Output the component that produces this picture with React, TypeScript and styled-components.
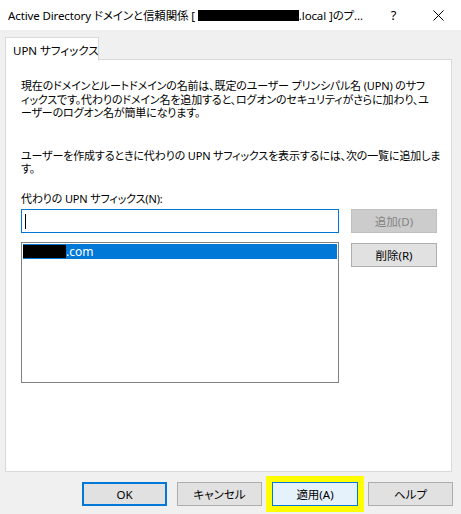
import React from 'react';
import styled, { createGlobalStyle } from 'styled-components';

const GlobalStyle = createGlobalStyle`
  html, body {
    margin: 0;
    padding: 0;
    background: #f0f0f0;
  }
  body {
    font-family: "Noto Sans", "Noto Sans CJK JP", sans-serif;
    font-size: 11px;
    color: #000;
  }
`;

const Window = styled.div`
  width: 461px;
  height: 514px;
  display: flex;
  flex-direction: column;
  background: #f0f0f0;
  overflow: hidden;
`;

const TitleBar = styled.div`
  height: 30px;
  flex: none;
  background: #ffffff;
  display: flex;
  align-items: center;
  padding-left: 8px;
`;

const Title = styled.div`
  flex: 1;
  font-size: 11.5px;
  letter-spacing: -0.12px;
  white-space: nowrap;
  display: flex;
  align-items: center;
  font-feature-settings: "palt";
`;

const Redacted = styled.span<{ w: number; h: number }>`
  display: inline-block;
  width: ${(p) => p.w}px;
  height: ${(p) => p.h}px;
  background: #000;
`;

const TitleButton = styled.div`
  width: 45px;
  height: 30px;
  display: flex;
  align-items: center;
  justify-content: center;
  font-size: 13px;
`;

const Body = styled.div`
  flex: 1;
  display: flex;
  flex-direction: column;
  padding: 7px 8px 0 5px;
`;

const TabStrip = styled.div`
  display: flex;
  height: 23px;
  margin-bottom: -1px;
  position: relative;
  z-index: 1;
`;

const Tab = styled.div`
  width: 94px;
  box-sizing: border-box;
  height: 24px;
  background: #ffffff;
  border: 1px solid #d9d9d9;
  border-bottom: none;
  padding-left: 7px;
  display: flex;
  align-items: center;
  white-space: nowrap;
  font-size: 11.5px;
  font-feature-settings: "palt";
`;

const Panel = styled.div`
  width: 447px;
  height: 413px;
  box-sizing: border-box;
  background: #ffffff;
  border: 1px solid #d9d9d9;
  padding: 19px 0 0 15px;
  display: flex;
  flex-direction: column;
`;

const Paragraph = styled.p<{ gap: number }>`
  margin: 0 0 ${(p) => p.gap}px 0;
  line-height: 13.5px;
  letter-spacing: -0.15px;
  white-space: nowrap;
  font-feature-settings: "palt";
`;

const Row = styled.div`
  display: flex;
  align-items: flex-start;
  gap: 12px;
`;

const TextBox = styled.div`
  width: 318px;
  height: 24px;
  box-sizing: border-box;
  border: 1px solid #0078d7;
  display: flex;
  align-items: center;
  padding-left: 3px;
`;

const Caret = styled.span`
  width: 1px;
  height: 15px;
  background: #000;
`;

const ListBox = styled.div`
  width: 318px;
  height: 141px;
  box-sizing: border-box;
  border: 1px solid #828282;
  padding: 1px;
  margin-top: 9px;
`;

const ListItem = styled.div<{ selected?: boolean }>`
  height: 15px;
  display: flex;
  align-items: center;
  font-size: 12px;
  background: ${(p) => (p.selected ? '#0078d7' : 'transparent')};
  color: ${(p) => (p.selected ? '#ffffff' : '#000000')};
  white-space: nowrap;
`;

const Button = styled.button<{ variant?: 'default' | 'disabled' | 'focus' | 'hot' }>`
  width: ${(p) => (p.variant === 'hot' ? 86 : 85)}px;
  height: 24px;
  box-sizing: border-box;
  padding: 0;
  margin: 0;
  font-family: "Noto Sans", "Noto Sans CJK JP", sans-serif;
  font-size: 11.5px;
  font-feature-settings: "palt";
  background: ${(p) =>
    p.variant === 'disabled' ? '#cccccc' : p.variant === 'hot' ? '#e5f1fb' : '#e1e1e1'};
  color: ${(p) => (p.variant === 'disabled' ? '#838383' : '#000000')};
  border: ${(p) =>
    p.variant === 'focus'
      ? '2px solid #0078d7'
      : p.variant === 'hot'
      ? '1px solid #0078d7'
      : p.variant === 'disabled'
      ? '1px solid #bfbfbf'
      : '1px solid #adadad'};
  outline: ${(p) => (p.variant === 'hot' ? '6px solid #ffff00' : 'none')};
`;

const SideButton = styled(Button)<{ top?: number }>`
  width: 86px;
  margin-top: ${(p) => p.top ?? 0}px;
`;

const Footer = styled.div`
  display: flex;
  justify-content: flex-end;
  gap: 10px;
  margin-top: 10px;
`;

const CloseIcon = () => (
  <svg width="11" height="11" viewBox="0 0 11 11">
    <path d="M0.5 0.5 L10.5 10.5 M10.5 0.5 L0.5 10.5" stroke="#000" strokeWidth="1" />
  </svg>
);

const App = () => {
  return (
    <Window>
      <GlobalStyle />
      <TitleBar>
        <Title>
          Active Directory ドメインと信頼関係 [&nbsp;
          <Redacted w={101} h={11} />
          .local ]のプ...
        </Title>
        <TitleButton>?</TitleButton>
        <TitleButton>
          <CloseIcon />
        </TitleButton>
      </TitleBar>

      <Body>
        <TabStrip>
          <Tab>UPN サフィックス</Tab>
        </TabStrip>
        <Panel>
          <Paragraph gap={29}>
            現在のドメインとルートドメインの名前は、既定のユーザー プリンシパル名 (UPN) のサフ
            <br />
            ィックスです。代わりのドメイン名を追加すると、ログオンのセキュリティがさらに加わり、ユ
            <br />
            ーザーのログオン名が簡単になります。
          </Paragraph>
          <Paragraph gap={16}>
            ユーザーを作成するときに代わりの UPN サフィックスを表示するには、次の一覧に追加しま
            <br />
            す。
          </Paragraph>
          <Paragraph gap={4}>代わりの UPN サフィックス(N):</Paragraph>

          <Row>
            <TextBox>
              <Caret />
            </TextBox>
            <SideButton variant="disabled">追加(D)</SideButton>
          </Row>

          <Row>
            <ListBox>
              <ListItem selected>
                <Redacted w={43} h={13} />
                .com
              </ListItem>
            </ListBox>
            <SideButton top={10}>削除(R)</SideButton>
          </Row>
        </Panel>

        <Footer>
          <Button variant="focus">OK</Button>
          <Button>キャンセル</Button>
          <Button variant="hot">適用(A)</Button>
          <Button>ヘルプ</Button>
        </Footer>
      </Body>
    </Window>
  );
};

export default App;
